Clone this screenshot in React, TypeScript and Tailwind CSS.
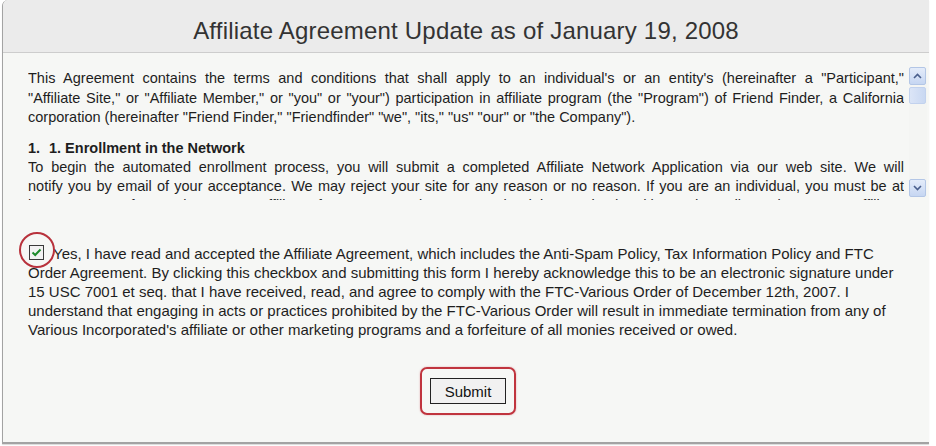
import React from "react";

const intro = [
  'This Agreement contains the terms and conditions that shall apply to an individual\'s or an entity\'s (hereinafter a "Participant,"',
  '"Affiliate Site," or "Affiliate Member," or "you" or "your") participation in affiliate program (the "Program") of Friend Finder, a California',
];
const introLast = 'corporation (hereinafter "Friend Finder," "Friendfinder" "we", "its," "us" "our" or "the Company").';

const enroll = [
  "To begin the automated enrollment process, you will submit a completed Affiliate Network Application via our web site. We will",
  "notify you by email of your acceptance. We may reject your site for any reason or no reason. If you are an individual, you must be at",
  "least 18 years of age to become an Affiliate. If you are an entity, you must be duly organized and in good standing to become an Affiliate.",
];

const consent = [
  "Order Agreement. By clicking this checkbox and submitting this form I hereby acknowledge this to be an electronic signature under",
  "15 USC 7001 et seq. that I have received, read, and agree to comply with the FTC-Various Order of December 12th, 2007. I",
  "understand that engaging in acts or practices prohibited by the FTC-Various Order will result in immediate termination from any of",
  "Various Incorporated's affiliate or other marketing programs and a forfeiture of all monies received or owed.",
];

function ScrollBar() {
  return (
    <div className="w-[18px] h-[130px] flex flex-col bg-[#f4f5f3]">
      <div className="h-[18px] w-[17px] rounded-[2px] border border-[#b3c6e6] bg-gradient-to-b from-[#e4ecfa] to-[#c6d6f2] flex items-center justify-center">
        <svg width="9" height="6" viewBox="0 0 9 6">
          <path d="M1 5 L4.5 1.5 L8 5" fill="none" stroke="#4a5f8c" strokeWidth="1.6" />
        </svg>
      </div>
      <div className="mt-[2px] h-[17px] w-[17px] rounded-[2px] border border-[#c2d2ee] bg-gradient-to-r from-[#dbe5f7] to-[#c9d8f2]" />
      <div className="flex-1" />
      <div className="h-[18px] w-[17px] rounded-[2px] border border-[#b3c6e6] bg-gradient-to-b from-[#e4ecfa] to-[#c6d6f2] flex items-center justify-center">
        <svg width="9" height="6" viewBox="0 0 9 6">
          <path d="M1 1 L4.5 4.5 L8 1" fill="none" stroke="#4a5f8c" strokeWidth="1.6" />
        </svg>
      </div>
    </div>
  );
}

export default function App() {
  return (
    <div className="w-[936px] h-[446px] bg-white pl-[2px] pr-[7px] pb-[2px] font-['Liberation_Sans',Arial,sans-serif] text-[#1e1e1e]">
      <div className="h-full flex flex-col rounded-tl-[6px] border-l border-b-2 border-[#a3a3a3] bg-[#f6f7f5] shadow-[0_1px_1px_rgba(0,0,0,0.15)]">
        <div className="h-[53px] shrink-0 rounded-tl-[6px] bg-[#ebebeb] border-b border-[#cdcdcd] flex items-center justify-center pt-[10px]">
          <h1 className="text-[24px] text-[#333] tracking-[0.2px]">Affiliate Agreement Update as of January 19, 2008</h1>
        </div>

        <div className="mt-[14px] ml-[25px] flex gap-[5px] h-[133px]">
          <div className="w-[876px] overflow-hidden pt-[2px] text-[14.5px] leading-[19.5px]">
            {intro.map((l) => (
              <div key={l} className="whitespace-nowrap text-justify [text-align-last:justify]">
                {l}
              </div>
            ))}
            <div className="whitespace-nowrap">{introLast}</div>
            <div className="mt-[11px] font-bold text-[14.5px] leading-[19px] whitespace-nowrap">
              <span className="inline-block w-[21px]">1.</span>1. Enrollment in the Network
            </div>
            {enroll.map((l) => (
              <div key={l} className="whitespace-nowrap text-justify [text-align-last:justify] leading-[19px]">
                {l}
              </div>
            ))}
          </div>
          <ScrollBar />
        </div>

        <div className="mt-[44px] ml-[25px] text-[15px] leading-[19px]">
          <div className="flex items-center">
            <div className="relative w-[25px] h-[19px] flex items-center">
              <div className="w-[15px] h-[15px] ml-[1px] -mt-[3px] border border-[#3a3a3a] bg-[#f2f2f2] flex items-center justify-center">
                <svg width="11" height="9" viewBox="0 0 11 9">
                  <path d="M1.5 4.5 L4.2 7 L9.5 1.5" fill="none" stroke="#1c8a2a" strokeWidth="2" />
                </svg>
              </div>
              <div className="absolute left-[-9px] top-[-12px] w-[36px] h-[36px] rounded-full border-2 border-[#b8323c]" />
            </div>
            <span className="whitespace-nowrap">
              Yes, I have read and accepted the Affiliate Agreement, which includes the Anti-Spam Policy, Tax Information Policy and FTC
            </span>
          </div>
          {consent.map((l) => (
            <div key={l} className="whitespace-nowrap">
              {l}
            </div>
          ))}
        </div>

        <div className="mt-[28px] flex justify-center">
          <div className="ml-[4px] rounded-[7px] border-2 border-[#c0343e] px-[8px] py-[9px] shadow-[0_0_2px_rgba(192,52,62,0.4)]">
            <button className="h-[26px] w-[76px] border border-[#222] bg-[#f1f1f1] text-[15px] text-[#111] leading-none">
              Submit
            </button>
          </div>
        </div>
      </div>
    </div>
  );
}
